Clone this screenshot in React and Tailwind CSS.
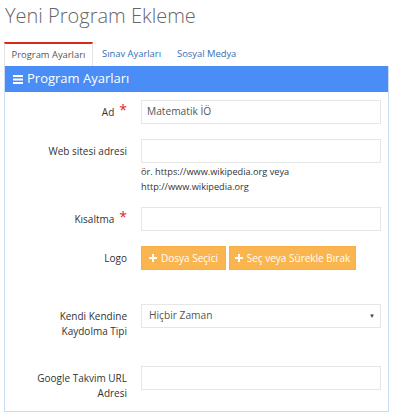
export default function App() {
  const font = { fontFamily: '"Open Sans", "Noto Sans", sans-serif' };
  const Label = ({ children, req }) => (
    <div className="w-[122px] shrink-0 text-right text-[10px] leading-[15px] text-[#333] pt-[5px]">
      {children}
      {req && <span className="text-[#e02424] text-[14px] leading-[10px] ml-[5px] relative top-[-1px]">*</span>}
    </div>
  );
  const Input = ({ value }) => (
    <div className="w-[240px] h-[24px] border border-[#e6e6e6] px-[5px] flex items-center text-[10.2px] text-[#555]">
      {value}
    </div>
  );
  const Plus = () => (
    <svg width="8" height="8" viewBox="0 0 8 8" className="mr-[4px]">
      <path d="M3 0h2v3h3v2H5v3H3V5H0V3h3z" fill="white" />
    </svg>
  );
  return (
    <div className="w-[395px] h-[416px] bg-white overflow-hidden" style={font}>
      <div className="pl-[5px] pt-[1px] h-[42px] text-[20px] leading-[30px] font-light text-[#666]">
        Yeni Program Ekleme
      </div>
      <div className="flex ml-[4px] h-[24px]">
        <div className="w-[89px] border-t-2 border-[#d9281e] border-x border-x-[#e3e3e3] bg-white flex items-center justify-center text-[9.4px] text-[#555]">
          Program Ayarları
        </div>
        <div className="pl-[9px] pr-[16px] flex items-center text-[9.4px] text-[#2f6fb5]">Sınav Ayarları</div>
        <div className="flex items-center text-[9.4px] text-[#2f6fb5]">Sosyal Medya</div>
      </div>
      <div className="ml-[4px] w-[385px] h-[346px] border border-[#c9dbf7] border-t-0">
        <div className="h-[26px] bg-[#4a8df6] flex items-center pl-[8px] text-white text-[13px]">
          <svg width="10" height="9" viewBox="0 0 10 9" className="mr-[4px] mt-[1px]">
            <rect x="0" y="0" width="10" height="2" fill="white" />
            <rect x="0" y="3.5" width="10" height="2" fill="white" />
            <rect x="0" y="7" width="10" height="2" fill="white" />
          </svg>
          Program Ayarları
        </div>
        <div className="flex flex-col">
          <div className="flex gap-[14px] mt-[8px]">
            <Label req>Ad</Label>
            <Input value="Matematik İÖ" />
          </div>
          <div className="flex gap-[14px] mt-[15px]">
            <Label>Web sitesi adresi</Label>
            <div>
              <Input value="" />
              <div className="text-[9.2px] leading-[15px] text-[#333] mt-[1px]">
                ör. https://www.wikipedia.org veya<br />http://www.wikipedia.org
              </div>
            </div>
          </div>
          <div className="flex gap-[14px] mt-[13px]">
            <Label req>Kısaltma</Label>
            <Input value="" />
          </div>
          <div className="flex gap-[14px] mt-[15px]">
            <Label>Logo</Label>
            <div className="flex gap-[3px]">
              <div className="h-[24px] w-[85px] bg-[#fab54e] border border-[#f5b04a] flex items-center justify-center text-white text-[10px]">
                <Plus />Dosya Seçici
              </div>
              <div className="h-[24px] w-[127px] bg-[#fab54e] border border-[#f5b04a] flex items-center justify-center text-white text-[10px]">
                <Plus />Seç veya Sürekle Bırak
              </div>
            </div>
          </div>
          <div className="flex gap-[14px] mt-[34px]">
            <Label>Kendi Kendine<br />Kaydolma Tipi</Label>
            <div className="w-[240px] h-[24px] border border-[#e6e6e6] pl-[7px] pr-[5px] flex items-center justify-between text-[10.2px] text-[#555]">
              <span>Hiçbir Zaman</span>
              <span className="text-[6px] text-[#444]">▼</span>
            </div>
          </div>
          <div className="flex gap-[14px] mt-[27px]">
            <Label>Google Takvim URL<br />Adresi</Label>
            <Input value="" />
          </div>
        </div>
      </div>
    </div>
  );
}
